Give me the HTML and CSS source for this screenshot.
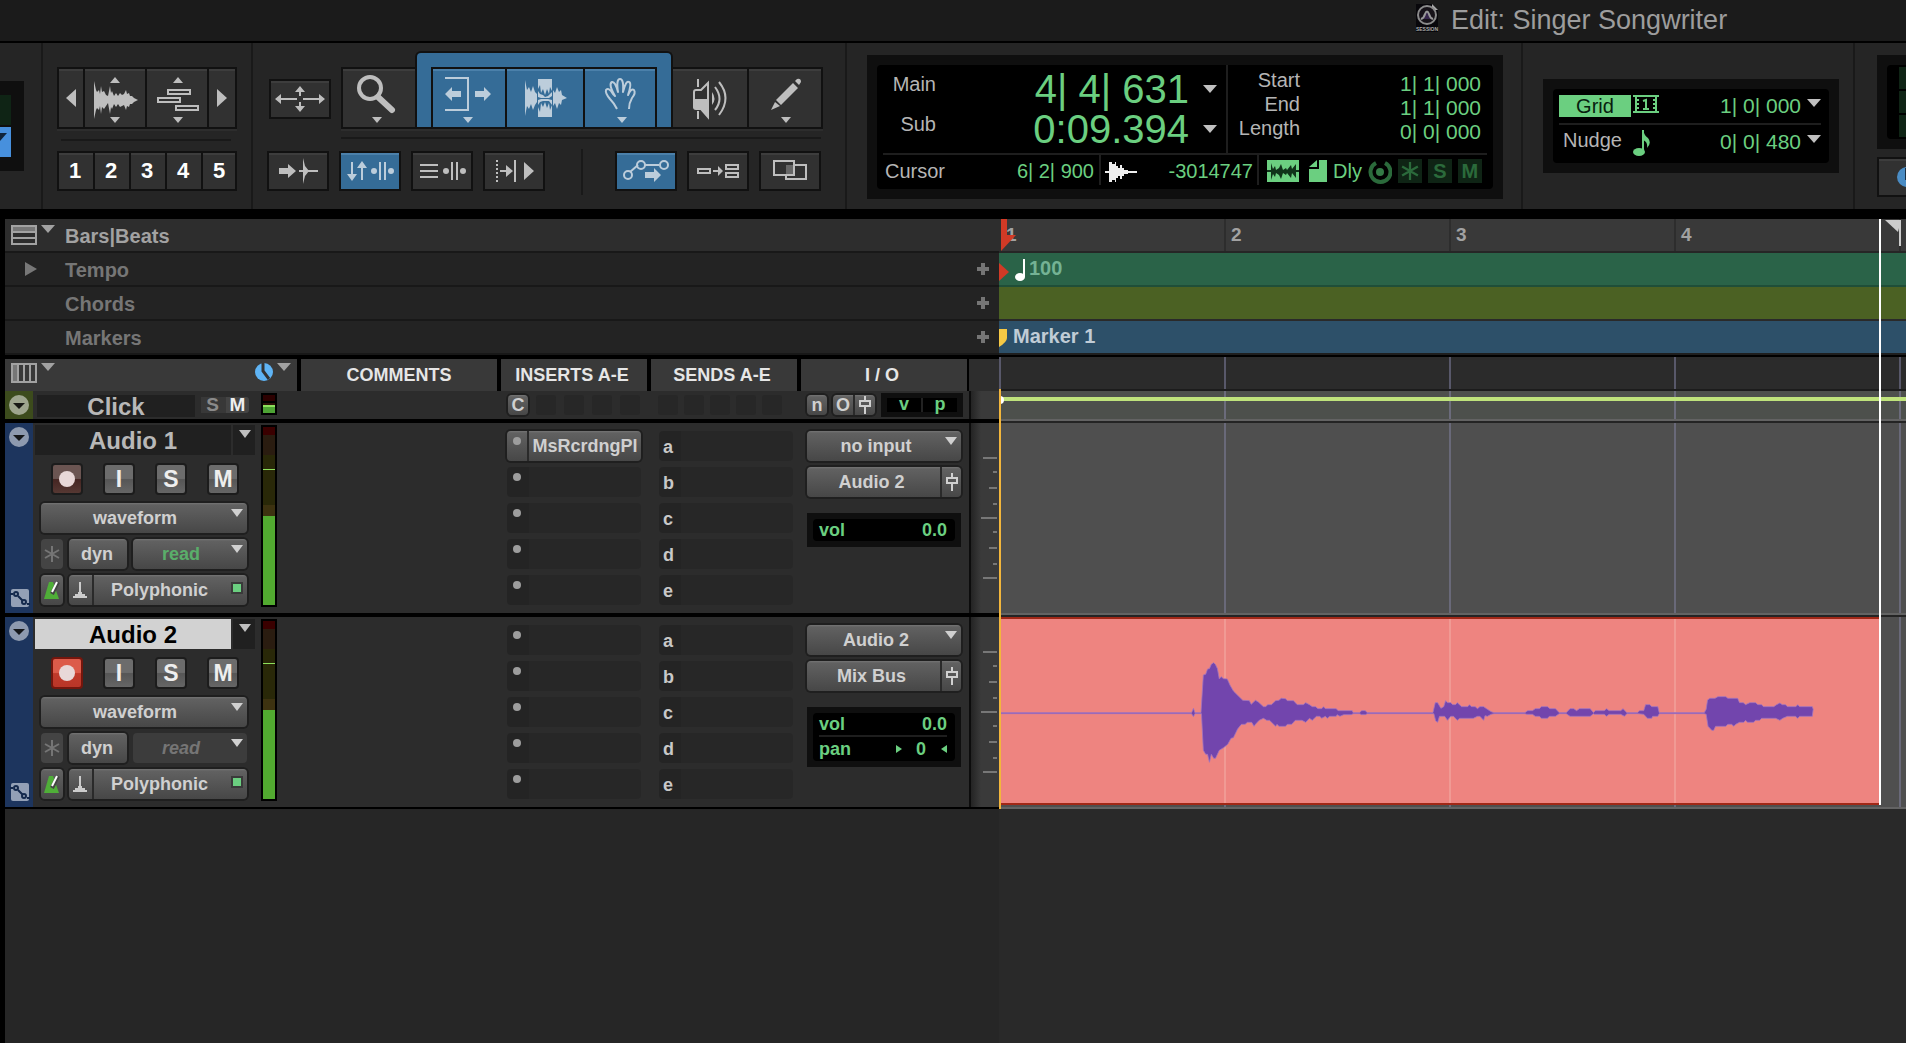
FILE: index.html
```html
<!DOCTYPE html>
<html lang="en">
<head>
  <meta charset="UTF-8">
  <title>Edit: Singer Songwriter</title>
  <meta name="viewport" content="width=device-width, initial-scale=1.0">
  <link rel="stylesheet" href="styles.css">
</head>
<body>
  <!-- shared icons -->
  <svg class="defs" aria-hidden="true">
    <symbol id="wave" viewBox="0 0 44 38"><path d="M0 0L2 9 3 11 5 9 6 13 7 5 8 11 10 10 12 14 14 15 16 5 17 12 18 10 20 15 22 12 24 15 26 12 28 14 30 13 32 9 33 13 35 12 36 15 38 15 40 17 44 19 40 21 38 23 36 23 35 26 33 25 32 29 30 24 28 25 26 26 24 23 22 26 20 23 18 28 17 26 16 33 14 22 12 25 10 28 8 26 7 33 6 25 5 29 3 27 2 29 0 38z" fill="currentColor"/></symbol>
    <symbol id="fader" viewBox="0 0 12 20"><path d="M6 1v5M6 12v7M1 6h10v5H1z" fill="none" stroke="currentColor" stroke-width="2"/></symbol>
    <symbol id="curve" viewBox="0 0 22 22"><rect x="2" y="2" width="18" height="18" rx="2" fill="#93a0b6"/><path d="M1 7h3M9 9l5 5M18 17h3" stroke="#14294d" stroke-width="2"/><circle cx="7" cy="7" r="2" fill="#93a0b6" stroke="#14294d" stroke-width="2"/><circle cx="15" cy="15" r="2" fill="#93a0b6" stroke="#14294d" stroke-width="2"/></symbol>
    <symbol id="metro" viewBox="0 0 18 20"><path d="M6 2h4l6 17H1z" fill="#4fae38"/><path d="M9 14l6-12" stroke="#444" stroke-width="4"/><path d="M9 12l5-10" stroke="#fff" stroke-width="2"/></symbol>
    <symbol id="timebase" viewBox="0 0 16 18"><path d="M8 1v12" stroke="#ccc" stroke-width="2"/><path d="M1 17v-2h2v-2h3v-2h4v2h3v2h2v2z" fill="#ccc"/></symbol>
    <symbol id="ticks" viewBox="0 0 28 190"><path d="M12 35h14M22 49h4M18 65h8M22 81h4M10 95h16M22 109h4M18 125h8M22 141h4M12 155h14" stroke="#777" stroke-width="2"/></symbol>
    <symbol id="circledown" viewBox="0 0 20 20"><circle cx="10" cy="10" r="10" fill="#fff" fill-opacity=".5"/><path d="M4 8h12l-6 6z" fill="#000" fill-opacity=".85"/></symbol>
    <symbol id="star" viewBox="0 0 16 16"><path d="M8 0v16M1 4l14 8M1 12l14-8" stroke="currentColor" stroke-width="2"/></symbol>
    <symbol id="plus" viewBox="0 0 12 12"><path d="M6 0v12M0 6h12" stroke="#757575" stroke-width="4"/></symbol>
  </svg>

  <header class="titlebar">
    <svg width="24" height="30" viewBox="0 0 24 30"><path d="M1 1h16l6 6v22H1z" fill="#08070b"/><path d="M17 1v6h6z" fill="#aaa"/><circle cx="12" cy="12" r="9" fill="#171319" stroke="#8b8b8b" stroke-width="2"/><path d="M6 16q3-1 4-5 2-5 4 0 1 4 4 5" fill="#36264b" stroke="#999" stroke-width="2"/><text x="12" y="28" class="icon-text" text-anchor="middle">SESSION</text></svg>
    <h1>Edit: Singer Songwriter</h1>
  </header>

  <div class="toolbar">
    <section class="mode-edge">
      <div class="edge-screen"><i></i><b><span class="tri"></span></b></div>
    </section>

    <section class="zoom">
      <div class="group zoom-top">
        <button class="tool" aria-label="Zoom out"><svg width="10" height="18" viewBox="0 0 10 18"><path d="M10 0v18L0 9z" fill="currentColor"/></svg></button>
        <button class="tool" aria-label="Audio zoom"><svg width="60" height="58" viewBox="0 0 60 58"><path d="M30 8l5 6H25zM30 54l5-6H25z" fill="currentColor"/><use href="#wave" x="9" y="12" width="44" height="38"/></svg></button>
        <button class="tool" aria-label="MIDI zoom"><svg width="60" height="58" viewBox="0 0 60 58"><path d="M31 8l5 6H26zM31 54l5-6H26z" fill="currentColor"/><path d="M21 21h22v4H21zM11 29h22v4H11zM29 37h22v4H29z" fill="none" stroke="currentColor" stroke-width="2"/></svg></button>
        <button class="tool" aria-label="Zoom in"><svg width="10" height="18" viewBox="0 0 10 18"><path d="M0 0v18l10-9z" fill="currentColor"/></svg></button>
      </div>
      <div class="group presets">
        <button class="tool">1</button>
        <button class="tool">2</button>
        <button class="tool">3</button>
        <button class="tool">4</button>
        <button class="tool">5</button>
      </div>
    </section>

    <section class="tools">
      <div class="tools-top">
        <button class="tool small" aria-label="Zoom toggle"><svg width="50" height="28" viewBox="0 0 50 28"><path d="M5 14h17M28 14h17M25 5v6M25 17v6" stroke="currentColor" stroke-width="2"/><path d="M0 14l6-5v10zM50 14l-6-5v10zM25 1l5 6H20zM25 27l5-6H20z" fill="currentColor"/></svg></button>
        <div class="group edit-tools">
          <button class="tool" aria-label="Zoomer"><svg width="72" height="58" viewBox="0 0 72 58"><circle cx="27" cy="19" r="11" fill="none" stroke="currentColor" stroke-width="4"/><path d="M35 28l14 13" stroke="currentColor" stroke-width="6" stroke-linecap="round"/><path d="M29 48h10l-5 6z" fill="currentColor"/></svg></button>
          <div class="smart">
            <button class="tool on" aria-label="Trim"><svg width="72" height="58" viewBox="0 0 72 58"><path d="M12 9h23v32H12" fill="none" stroke="currentColor" stroke-width="2"/><path d="M12 25l7-7v4h9v6h-9v4zM58 25l-7-7v4h-9v6h9v4zM30 48h10l-5 6z" fill="currentColor"/></svg></button>
            <button class="tool on" aria-label="Selector"><svg width="76" height="58" viewBox="0 0 76 58"><path d="M31 10h14v38H31z" fill="currentColor"/><path d="M18 11L20 21 22 18 24 23 26 17 28 23 30 25V33L28 36 26 41 24 35 22 40 20 37 18 47zM46 21L48 24 50 18 52 23 54 21 55 26 60 29 55 31 54 36 52 34 50 40 48 34 46 37z" fill="currentColor"/><path d="M31 20L33 16 34 24 36 20 38 26 40 20 42 25 43 18 45 22V36L43 41 42 34 40 39 38 33 36 38 34 34 33 43 31 38z" fill="#356c97"/><path d="M31 22l2 3 3 1 2 2 3-1 2-2 2-2v4l-3 2h-8l-3-1zM31 36l2-3 3-1h6l3 4v-5l-4-1h-7l-3 1z" fill="currentColor"/></svg></button>
            <button class="tool on" aria-label="Grabber"><svg width="70" height="58" viewBox="0 0 70 58"><path d="M32 40q-3-6-7-10-5-6-4-9 3-3 7 4l2 2q-7-12-3-14 3-1 6 10-2-13 2-13 4 0 3 13 3-12 6-10 3 1-1 13 3-7 6-5 2 3-2 8-3 5-3 11" fill="none" stroke="currentColor" stroke-width="2" stroke-linejoin="round"/><path d="M32 48h10l-5 6z" fill="currentColor"/></svg></button>
          </div>
          <button class="tool" aria-label="Scrubber"><svg width="74" height="58" viewBox="0 0 74 58"><path d="M25 10v8M25 42v8" stroke="currentColor" stroke-width="2"/><path d="M21 30V23q0-2 2-2h5l7-7v34l-7-8h-5q-2 0-2-2z" fill="none" stroke="currentColor" stroke-width="2"/><path d="M20 30h16v18l-8-8h-5q-3 0-3-3zM39 23q5 7 0 13z" fill="currentColor"/><path d="M42 18q9 12 0 23M46 13q13 16 0 33" fill="none" stroke="currentColor" stroke-width="2"/></svg></button>
          <button class="tool" aria-label="Pencil"><svg width="72" height="58" viewBox="0 0 72 58"><path d="M27 31l17-17 5 5-17 17zM46 12l2-2q4-1 4 3l-2 3zM26 33l5 4-9 4z" fill="currentColor"/><path d="M32 48h10l-5 6z" fill="currentColor"/></svg></button>
        </div>
      </div>
      <div class="tools-bottom">
        <button class="tool small" aria-label="Tab to transients"><svg width="40" height="28" viewBox="0 0 40 28"><path d="M1 11h9V7l8 7-8 7v-4H1zM25 1l2 8 4 5-4 5-2 8z" fill="currentColor"/><path d="M21 14h19" stroke="currentColor" stroke-width="2"/></svg></button>
        <button class="tool small on" aria-label="Link timeline"><svg width="48" height="28" viewBox="0 0 48 28"><path d="M6 5v14M16 9v14M34 5v18M39 5v18" stroke="currentColor" stroke-width="2"/><path d="M1 17h10l-5 7zM11 11h10l-5-7z" fill="currentColor"/><circle cx="28" cy="14" r="3" fill="currentColor"/><circle cx="45" cy="14" r="3" fill="currentColor"/></svg></button>
        <button class="tool small" aria-label="Link track"><svg width="48" height="28" viewBox="0 0 48 28"><path d="M2 8h18M2 14h18M2 20h18M34 5v18M39 5v18" stroke="currentColor" stroke-width="2"/><circle cx="28" cy="14" r="3" fill="currentColor"/><circle cx="45" cy="14" r="3" fill="currentColor"/></svg></button>
        <button class="tool small" aria-label="Insertion follows playback"><svg width="40" height="28" viewBox="0 0 40 28"><path d="M3 3v22" stroke="currentColor" stroke-width="2" stroke-dasharray="2 2"/><path d="M6 14h8M21 3v22" stroke="currentColor" stroke-width="2"/><path d="M12 8l7 6-7 6zM30 5l10 9-10 9z" fill="currentColor"/></svg></button>
        <span class="bar"></span>
        <button class="tool small on" aria-label="Automation follows edit"><svg width="48" height="28" viewBox="0 0 48 28"><path d="M8 15l8-7M23 8h14" stroke="currentColor" stroke-width="2"/><g fill="none" stroke="currentColor" stroke-width="2"><circle cx="6" cy="18" r="4"/><circle cx="19" cy="8" r="4"/><circle cx="42" cy="8" r="4"/></g><path d="M23 15h9v-4l7 7-7 7v-4h-9z" fill="currentColor"/></svg></button>
        <button class="tool small" aria-label="Mirrored MIDI"><svg width="44" height="28" viewBox="0 0 44 28"><path d="M2 12h12v4H2zM30 8h12v4H30zM30 16h12v4H30zM17 14h6" fill="none" stroke="currentColor" stroke-width="2"/><path d="M22 9l5 5-5 5z" fill="currentColor"/></svg></button>
        <button class="tool small" aria-label="Layered editing"><svg width="36" height="28" viewBox="0 0 36 28"><path d="M14 8h8v10h-8z" fill="#666"/><path d="M2 4h20v14H2z" fill="none" stroke="currentColor" stroke-width="2"/><path d="M23 8h11v14H14v-4" fill="none" stroke="currentColor" stroke-width="2"/></svg></button>
      </div>
    </section>

    <section class="counters">
      <div class="lcd">
        <div class="screen">
          <div class="screen-top">
            <div class="main-count">
              <span>Main</span><output>4| 4| 631</output><button class="tri" aria-label="Main format"></button>
              <span>Sub</span><output>0:09.394</output><button class="tri" aria-label="Sub format"></button>
            </div>
            <div class="sel-count">
              <span>Start</span><output>1| 1| 000</output>
              <span>End</span><output>1| 1| 000</output>
              <span>Length</span><output>0| 0| 000</output>
            </div>
          </div>
          <div class="screen-bottom">
            <div class="cursor"><span>Cursor</span><output>6| 2| 900</output></div>
            <div class="sample">
              <svg width="32" height="24" viewBox="0 0 32 24"><path d="M4 2h3v2h3v-2h1v4h2v2h2v-3h2v3h2v2h4v1h9v2h-9v1h-4v2h-2v3h-2v-3h-2v2h-2v4h-1v-2H7v2H4v-9H0v-2h4z" fill="#eee"/></svg>
              <output>-3014747</output>
            </div>
            <div class="status">
              <svg width="32" height="22" viewBox="0 0 32 22"><path d="M0 0h32v22H0z" fill="#6bcf80"/><path d="M0 10h32v2H0zM4 3l2 6 2-3 1 4 3-2 2-4 2 6 3-2 1 2 4-5 1 4 4-5v14l-4-5-1 5-4-5-1 2-3-2-2 6-2-4-3-2-1 4-2-3-2 6z" fill="#10331a"/></svg>
              <svg width="18" height="22" viewBox="0 0 18 22"><path d="M10 0h8v22H0V9h10zM8 0v7H0z" fill="#6bcf80"/></svg>
              <span class="dly">Dly</span>
              <svg width="24" height="24" viewBox="0 0 24 24"><path d="M8 3a10 10 0 1 0 9 0" fill="none" stroke="#2b6a3b" stroke-width="4"/><circle cx="12" cy="12" r="4" fill="#347a46"/></svg>
              <span class="dim"><svg width="18" height="18"><use href="#star"/></svg></span>
              <span class="dim">S</span>
              <span class="dim">M</span>
            </div>
          </div>
        </div>
      </div>
    </section>

    <section class="gridnudge">
      <div class="lcd">
        <div class="screen">
          <div class="gn-row">
            <button class="grid-on">Grid</button>
            <svg width="26" height="18" viewBox="0 0 26 18"><path d="M0 1h26M0 17h26M3 0v18M23 0v18" stroke="#6bcf80" stroke-width="2"/><path d="M5 4v12M21 4v12" stroke="#6bcf80" stroke-width="2" stroke-dasharray="2 2"/><path d="M10 6l3-1v9M10 14h6" fill="none" stroke="#6bcf80" stroke-width="2"/></svg>
            <output>1| 0| 000</output><button class="tri" aria-label="Grid value"></button>
          </div>
          <div class="gn-row">
            <span class="nudge">Nudge</span>
            <svg width="18" height="28" viewBox="0 0 18 28"><ellipse cx="6" cy="23" rx="6" ry="4" fill="#6bcf80"/><path d="M10 23V1" stroke="#6bcf80" stroke-width="2"/><path d="M10 1q1 5 5 8 4 5-1 10 1-6-4-8z" fill="#6bcf80"/></svg>
            <output>0| 0| 480</output><button class="tri" aria-label="Nudge value"></button>
          </div>
        </div>
      </div>
    </section>

    <section class="transport-edge">
      <div class="edge-lcd"><div><i></i><i></i><i></i></div></div>
      <div class="edge-btn"><svg width="32" height="36" viewBox="0 0 32 36"><circle cx="28" cy="18" r="10" fill="#4a8cc4"/><path d="M27 9v11h5" fill="none" stroke="#1b2f42" stroke-width="2"/></svg></div>
    </section>
  </div>

  <main class="editor">
    <div class="ruler bars">
      <div class="ruler-name">
        <svg class="view-icon" width="26" height="20" viewBox="0 0 26 20"><path d="M1 1h24v5H1z" fill="#777"/><path d="M1 1h24v18H1zM1 7h24M1 13h24" fill="none" stroke="#a2a2a2" stroke-width="2"/></svg>
        <span class="tri"></span>Bars|Beats
      </div>
      <div class="ruler-lane">
        <svg class="cursor-flag" width="18" height="32" viewBox="0 0 18 32"><path d="M0 0h6v16h9L0 32z" fill="#d13a26"/></svg>
        <span>1</span><span>2</span><span>3</span><span>4</span><span></span>
      </div>
    </div>
    <div class="ruler tempo">
      <div class="ruler-name"><svg class="expand" width="12" height="14" viewBox="0 0 12 14"><path d="M0 0l12 7-12 7z" fill="#777"/></svg>Tempo<button class="add" aria-label="Add tempo"><svg width="12" height="12"><use href="#plus"/></svg></button></div>
      <div class="ruler-lane">
        <svg width="30" height="32" viewBox="0 0 30 32"><path d="M0 10l10 9-10 9z" fill="#d13a26"/><ellipse cx="21" cy="24" rx="5" ry="4" fill="#fff"/><path d="M25 24V6" stroke="#fff" stroke-width="2"/></svg>100
      </div>
    </div>
    <div class="ruler chords">
      <div class="ruler-name">Chords<button class="add" aria-label="Add chord"><svg width="12" height="12"><use href="#plus"/></svg></button></div>
      <div class="ruler-lane"></div>
    </div>
    <div class="ruler markers">
      <div class="ruler-name">Markers<button class="add" aria-label="Add marker"><svg width="12" height="12"><use href="#plus"/></svg></button></div>
      <div class="ruler-lane"><svg width="14" height="32" viewBox="0 0 14 32"><path d="M0 8h8v9q0 4-8 9z" fill="#f6c945"/></svg>Marker 1</div>
    </div>

    <div class="row heads">
      <div class="panel">
        <div class="head view-head">
          <svg width="26" height="20" viewBox="0 0 26 20"><path d="M1 1h6v18H1z" fill="#777"/><path d="M1 1h24v18H1zM7 1v18M13 1v18M19 1v18" fill="none" stroke="#a2a2a2" stroke-width="2"/></svg>
          <span class="tri"></span>
          <svg class="clock" width="18" height="18" viewBox="0 0 18 18"><circle cx="9" cy="9" r="9" fill="#5fb4f5"/><path d="M8 0v8l6 8" fill="none" stroke="#333" stroke-width="3"/></svg>
          <span class="tri"></span>
        </div>
        <div class="head">COMMENTS</div>
        <div class="head">INSERTS A-E</div>
        <div class="head">SENDS A-E</div>
        <div class="head">I / O</div>
        <div class="head-end"></div>
      </div>
      <div class="lane"></div>
    </div>

    <div class="row click">
      <div class="panel">
        <div class="track-head">
          <div class="strip"><svg width="20" height="20"><use href="#circledown"/></svg></div>
          <div class="click-name">Click</div>
          <div class="click-sm"><button class="off">S</button><button>M</button></div>
          <div class="meter"></div>
        </div>
        <div></div>
        <div class="mini-slots"><button class="mini">C</button><i></i><i></i><i></i><i></i></div>
        <div class="mini-slots sends"><i></i><i></i><i></i><i></i><i></i></div>
        <div class="mini-io">
          <button class="mini">n</button>
          <span class="mini pair"><button>O</button><button aria-label="Output window"><svg width="12" height="20"><use href="#fader"/></svg></button></span>
          <div class="vp"><span>v</span><span>p</span></div>
        </div>
        <div class="gutter"></div>
      </div>
      <div class="lane"><div class="click-clip"></div></div>
    </div>

    <div class="row audio">
      <div class="panel">
        <div class="track-head">
          <div class="strip"><svg width="20" height="20"><use href="#circledown"/></svg><svg width="22" height="22"><use href="#curve"/></svg></div>
          <div class="controls">
            <div class="name-row"><button class="name">Audio 1</button><button class="name-menu" aria-label="Track menu"><span class="tri"></span></button></div>
            <div class="rism"><button class="rec" aria-label="Record"></button><button>I</button><button>S</button><button>M</button></div>
            <div class="opts">
              <label class="drop"><select aria-label="Track view"><option>waveform</option></select></label>
              <div class="opt-row"><button class="btn star" aria-label="Freeze"><svg width="16" height="16"><use href="#star"/></svg></button><button class="btn dyn">dyn</button><label class="drop read"><select aria-label="Automation"><option>read</option></select></label></div>
              <div class="opt-row"><button class="btn metro" aria-label="Timebase"><svg width="18" height="20"><use href="#metro"/></svg></button><div class="btn elastic"><button aria-label="Elastic"><svg width="16" height="18"><use href="#timebase"/></svg></button><button class="poly">Polyphonic<i></i></button></div></div>
            </div>
          </div>
          <div class="meter"></div>
        </div>
        <div></div>
        <div class="slots">
          <div class="btn plugin"><button aria-label="Insert a"></button><button>MsRcrdngPl</button></div>
          <div class="slot"></div><div class="slot"></div><div class="slot"></div><div class="slot"></div>
        </div>
        <div class="slots sends"><div class="slot">a</div><div class="slot">b</div><div class="slot">c</div><div class="slot">d</div><div class="slot">e</div></div>
        <div class="io">
          <label class="drop"><select aria-label="Input"><option>no input</option></select></label>
          <div class="btn output"><button>Audio 2</button><button aria-label="Output window"><svg width="12" height="20"><use href="#fader"/></svg></button></div>
          <div class="level"><div class="level-screen"><p><span>vol</span><output>0.0</output></p></div></div>
        </div>
        <div class="gutter"><svg width="28" height="190"><use href="#ticks"/></svg></div>
      </div>
      <div class="lane"></div>
    </div>

    <div class="row audio selected">
      <div class="panel">
        <div class="track-head">
          <div class="strip"><svg width="20" height="20"><use href="#circledown"/></svg><svg width="22" height="22"><use href="#curve"/></svg></div>
          <div class="controls">
            <div class="name-row"><button class="name">Audio 2</button><button class="name-menu" aria-label="Track menu"><span class="tri"></span></button></div>
            <div class="rism"><button class="rec armed" aria-label="Record"></button><button>I</button><button>S</button><button>M</button></div>
            <div class="opts">
              <label class="drop"><select aria-label="Track view"><option>waveform</option></select></label>
              <div class="opt-row"><button class="btn star" aria-label="Freeze"><svg width="16" height="16"><use href="#star"/></svg></button><button class="btn dyn">dyn</button><label class="drop read idle"><select aria-label="Automation"><option>read</option></select></label></div>
              <div class="opt-row"><button class="btn metro" aria-label="Timebase"><svg width="18" height="20"><use href="#metro"/></svg></button><div class="btn elastic"><button aria-label="Elastic"><svg width="16" height="18"><use href="#timebase"/></svg></button><button class="poly">Polyphonic<i></i></button></div></div>
            </div>
          </div>
          <div class="meter"></div>
        </div>
        <div></div>
        <div class="slots"><div class="slot"></div><div class="slot"></div><div class="slot"></div><div class="slot"></div><div class="slot"></div></div>
        <div class="slots sends"><div class="slot">a</div><div class="slot">b</div><div class="slot">c</div><div class="slot">d</div><div class="slot">e</div></div>
        <div class="io">
          <label class="drop"><select aria-label="Input"><option>Audio 2</option></select></label>
          <div class="btn output"><button>Mix Bus</button><button aria-label="Output window"><svg width="12" height="20"><use href="#fader"/></svg></button></div>
          <div class="level"><div class="level-screen"><p><span>vol</span><output>0.0</output></p><p class="pan"><span>pan</span><i class="pan-l"></i><output>0</output><i class="pan-r"></i></p></div></div>
        </div>
        <div class="gutter"><svg width="28" height="190"><use href="#ticks"/></svg></div>
      </div>
      <div class="lane">
        <div class="region">
          <svg width="876" height="184" viewBox="0 0 876 184">
            <g transform="translate(169 -18) scale(.4695 .3333)">
              <path fill="#7245ad" stroke="#a074c0" stroke-width="2" d="M-362 335H46L50 322 53 335H66L71 222 76 220 80 204 84 203 88 190 93 185 97 191 101 203 105 234 109 227 114 233 122 234 128 253 135 270 145 284 155 298 169 299 173 310 182 298 188 303 199 317 204 317 208 311 216 311 225 299 232 298 237 292 246 293 250 299 263 299 271 311 284 311 289 305 297 311 303 317 310 317 315 323 323 323 327 317 331 323 354 323 358 329 388 329 390 335 404 335 408 329 416 329 420 335 560 335 565 305 570 305 577 322 583 317 587 299 591 305 598 305 602 311 608 311 612 305 621 317 634 317 638 311 642 317 650 317 655 323 660 317 668 317 676 325 684 332 690 335 756 335 762 329 772 329 778 323 787 323 791 317 804 317 809 323 821 323 829 335 844 335 852 323 860 323 866 329 872 323 895 323 902 335 906 329 925 329 930 323 935 329 960 329 965 323 973 335 996 335 1000 329 1009 329 1013 311 1022 311 1026 317 1039 317 1042 335 1138 335 1142 325 1145 297 1150 292 1161 292 1167 287 1184 287 1188 292 1209 292 1213 305 1221 305 1226 311 1235 305 1247 305 1252 311 1260 311 1264 317 1286 317 1292 311 1299 306 1304 311 1311 311 1315 317 1333 317 1337 311 1341 317 1368 317 1370 325 1368 346 1341 346 1337 352 1332 346 1315 346 1305 352 1299 358 1290 352 1260 352 1256 358 1247 358 1243 364 1230 364 1226 358 1222 364 1213 364 1205 370 1201 376 1196 370 1188 370 1184 376 1162 376 1158 388 1154 388 1146 376 1142 340 1138 338 1042 338 1039 346 1028 346 1026 352 1017 352 1009 340 996 338 973 338 968 346 960 340 935 340 930 346 925 340 904 340 902 338 895 346 852 346 844 338 829 338 821 346 808 346 804 352 791 352 787 346 778 346 772 340 760 340 756 338 690 338 684 340 676 346 671 344 668 358 660 346 655 346 646 352 617 352 612 358 604 346 598 346 591 358 585 346 574 346 570 364 566 360 562 338 420 338 416 341 408 341 404 338 390 338 386 341 370 341 362 346 356 341 354 346 340 346 335 352 331 346 323 352 319 346 312 346 303 358 297 352 289 364 281 358 267 358 259 370 250 370 246 376 232 376 228 370 225 376 212 358 206 358 199 352 190 358 182 370 179 376 174 364 165 364 160 370 152 370 144 384 135 410 130 412 123 430 114 440 105 448 97 472 93 472 88 460 84 484 80 460 76 460 71 448 67 338 53 338 50 347 46 338H-362z"/>
            </g>
          </svg>
        </div>
      </div>
    </div>

    <div class="row empty"><div class="panel"></div><div class="lane"></div></div>

    <div class="insertion"></div>
    <div class="playhead"></div>
    <svg class="end-flag" width="16" height="28" viewBox="0 0 16 28"><path d="M0 1h16L13 13z" fill="#ccc"/><path d="M15 1v26" stroke="#ccc" stroke-width="2"/></svg>
  </main>
</body>
</html>
```
FILE: styles.css
```css
:root {
  --green: #6bcf80;
  --blue: #356c97;
  --icon: #bebebe;
  --panel-w: 994px;
  --beat: 225px;
}

* { box-sizing: border-box; margin: 0; padding: 0; }

body {
  font-family: "Liberation Sans", Arial, sans-serif;
  background: #000;
  color: #b5b5b5;
  min-height: 100vh;
  display: flex;
  flex-direction: column;
  overflow: hidden;
}

button, select {
  font: inherit;
  color: inherit;
  background: none;
  border: none;
  appearance: none;
}

svg { display: block; flex: none; }
.defs { position: absolute; width: 0; height: 0; }

.tri {
  width: 14px;
  height: 8px;
  flex: none;
  background: #c0c0c0;
  clip-path: polygon(0 0, 100% 0, 50% 100%);
}

/* title bar */
.titlebar {
  height: 43px;
  padding: 3px 0 0 1415px;
  background: #1b1b1b;
  border-bottom: 2px solid #000;
  display: flex;
  gap: 12px;
  white-space: nowrap;
}
.titlebar h1 { font-size: 27px; font-weight: normal; line-height: 34px; color: #9d9d9d; }
.icon-text { font-size: 5px; font-weight: bold; fill: #aaa; }

/* toolbar */
.toolbar {
  display: flex;
  height: 176px;
  background: #252525;
  border-bottom: 10px solid #000;
}
.toolbar section { flex: none; border-right: 2px solid #191919; }

.tool {
  background: linear-gradient(#3d3d3d 2px, #313131 2px);
  color: var(--icon);
  display: flex;
  align-items: center;
  justify-content: center;
}
.tool.on { background: linear-gradient(#4b80aa 2px, var(--blue) 2px); color: #bccddb; }
.tool.small { width: 62px; height: 40px; border: 2px solid #111; }

.group {
  display: flex;
  gap: 2px;
  background: #111;
  border: 2px solid #111;
  box-shadow: 0 2px #2d2d2d;
}

.mode-edge { width: 43px; padding-top: 38px; }
.edge-screen { width: 24px; height: 90px; background: #0f0f0f; padding: 10px 10px 10px 0; }
.edge-screen i, .edge-screen b { display: block; width: 11px; height: 30px; }
.edge-screen i { background: #0f2415; margin: 4px 0 2px; }
.edge-screen b { background: #4790dd; padding-top: 6px; overflow: hidden; }
.edge-screen .tri { display: block; background: #10243a; margin-left: -7px; }

.zoom { width: 210px; padding: 24px 14px 0; }
.zoom-top { height: 62px; }
.zoom-top .tool:first-child { width: 24px; }
.zoom-top .tool:nth-child(2), .zoom-top .tool:nth-child(3) { width: 60px; }
.zoom-top .tool:last-child { width: 26px; }
.presets { position: relative; height: 40px; margin-top: 22px; box-shadow: none; }
.presets .tool { width: 34px; font-size: 22px; font-weight: bold; color: #fff; padding-right: 2px; }
.presets .tool:last-child { width: 32px; padding: 0; }
.presets::before, .tools-bottom::before {
  content: "";
  position: absolute;
  top: -14px;
  left: 2px;
  right: 4px;
  height: 2px;
  background: #191919;
}

.tools { width: 594px; padding: 8px 0 0 14px; }
.tools-top { display: flex; align-items: flex-end; gap: 10px; padding-left: 2px; height: 78px; }
.tools-top > .small { margin-bottom: 10px; }
.edit-tools { height: 62px; align-items: stretch; }
.edit-tools .tool { flex: none; }
.smart {
  display: flex;
  gap: 2px;
  margin: -18px -2px 0;
  padding: 16px 16px 0;
  border: 2px solid #111;
  border-bottom: none;
  border-radius: 6px 6px 0 0;
  background: var(--blue);
}
.smart .tool { box-shadow: 0 0 0 2px #111; }
.tools-bottom { position: relative; display: flex; gap: 10px; margin-top: 22px; }
.tools-bottom::before { left: 74px; right: 24px; }
.tools-bottom .bar { width: 2px; height: 46px; margin: -2px 22px 0 26px; background: #191919; }

.counters { width: 676px; padding: 12px 18px 0 20px; }
.lcd { background: #0f0f0f; padding: 10px; }
.screen { background: #000; border-radius: 4px; font-size: 20px; }
.screen output { color: var(--green); white-space: pre; text-align: right; }
.screen-top { display: flex; height: 88px; }
.main-count {
  width: 351px;
  padding-top: 4px;
  border-right: 2px solid #1e1e1e;
  display: grid;
  grid-template-columns: 59px 253px 14px;
  grid-auto-rows: 40px;
}
.main-count span, .sel-count span { text-align: right; line-height: 30px; }
.main-count output { font-size: 40px; line-height: 40px; }
.main-count .tri { margin: 16px 0 0 14px; }
.sel-count {
  padding-top: 7px;
  display: grid;
  grid-template-columns: 72px 181px;
  grid-auto-rows: 24px;
}
.sel-count span { line-height: 17px; }
.sel-count output { font-size: 21px; line-height: 24px; }
.screen-bottom {
  display: flex;
  height: 36px;
  margin: 0 6px;
  border-top: 2px solid #1e1e1e;
  line-height: 33px;
}
.screen-bottom > div { display: flex; height: 30px; }
.cursor { width: 218px; padding: 0 5px 0 2px; justify-content: space-between; border-right: 2px solid #1e1e1e; }
.sample { width: 158px; padding: 0 4px; justify-content: space-between; border-right: 2px solid #1e1e1e; }
.sample svg, .status > svg { margin-top: 5px; }
.status { padding-left: 8px; gap: 6px; }
.status > svg:first-child { margin-right: 4px; }
.dly { color: var(--green); }
.dim {
  width: 24px;
  height: 24px;
  margin-top: 4px;
  background: #0f2415;
  color: #2b6a3b;
  font-weight: bold;
  line-height: 25px;
  text-align: center;
}
.dim svg { margin: 3px; }

.gridnudge { width: 332px; padding: 36px 14px 0 20px; }
.gn-row { display: flex; height: 34px; line-height: 34px; margin: 0 8px 0 6px; }
.gn-row:first-child { height: 36px; border-bottom: 2px solid #1e1e1e; }
.gn-row:last-child { height: 38px; }
.gn-row output { margin-left: auto; font-size: 21px; }
.gn-row > svg { margin: 6px 0 0 2px; }
.gn-row:last-child > svg { margin-top: 4px; }
.gn-row .tri { margin: 10px 0 0 6px; }
.grid-on { width: 72px; height: 22px; margin-top: 6px; background: var(--green); color: #08200e; line-height: 22px; }
.nudge { width: 72px; padding-left: 4px; line-height: 30px; }

.toolbar .transport-edge { flex: 1; overflow: hidden; border: none; padding: 12px 0 0 22px; }
.edge-lcd { height: 94px; padding: 10px 0 10px 10px; background: #0f0f0f; }
.edge-lcd div { height: 74px; padding: 2px 0 0 12px; background: #000; border-radius: 4px 0 0 4px; }
.edge-lcd i { display: block; height: 22px; margin-bottom: 2px; background: #0f2415; }
.edge-btn { height: 40px; margin-top: 8px; border: 2px solid #111; border-right: none; background: linear-gradient(#3d3d3d 2px, #313131 2px); }

/* rulers */
.editor { position: relative; flex: 1; display: flex; flex-direction: column; padding-left: 5px; }
.ruler { display: flex; height: 34px; font-size: 20px; font-weight: bold; line-height: 34px; }
.ruler-name {
  position: relative;
  width: var(--panel-w);
  flex: none;
  padding-left: 60px;
  background: #232323;
  border-bottom: 2px solid #181818;
  color: #767676;
}
.bars .ruler-name { background: #2d2d2d; color: #a2a2a2; }
.view-icon { position: absolute; left: 6px; top: 6px; }
.ruler-name .tri { position: absolute; left: 36px; top: 6px; background: #a2a2a2; }
.expand { position: absolute; left: 20px; top: 9px; }
.add { position: absolute; right: 10px; top: 10px; }
.ruler-lane { flex: 1; display: flex; overflow: hidden; line-height: 30px; border-bottom: 2px solid #1c2b24; }
.bars .ruler-lane { position: relative; background: #393939; border-color: #262626; font-size: 19px; line-height: 31px; color: #a2a2a2; }
.ruler-lane span { width: var(--beat); flex: none; padding-left: 5px; border-left: 2px solid #2d2d2d; }
.cursor-flag { position: absolute; left: 2px; top: 0; }
.tempo .ruler-lane { background: #2a6348; color: #74b294; border-color: #1f4e38; }
.chords .ruler-lane { background: #4b6123; border-color: #2a2a2a; }
.markers .ruler-lane { background: #2d5069; color: #c0ccd6; border-color: #1e1e1e; }

/* rows */
.row { display: flex; }
.panel {
  width: var(--panel-w);
  flex: none;
  display: grid;
  grid-template-columns: 292px 196px 146px 146px 166px 1fr;
  column-gap: 4px;
  background: #2c2c2c;
  border-bottom: 4px solid #000;
}
.lane {
  position: relative;
  flex: 1;
  overflow: hidden;
  background: repeating-linear-gradient(to right, #696979 0 2px, #4f4f4f 2px var(--beat));
  border-bottom: 2px solid #242424;
}
.lane::after { content: ""; position: absolute; left: 0; right: 0; bottom: 0; height: 2px; background: #636363; }

.heads { height: 36px; }
.heads .panel { background: #000; border-top: 4px solid #000; }
.head { background: #393939; color: #e6e6e6; font-size: 18px; font-weight: bold; line-height: 32px; text-align: center; }
.head:nth-child(n+3) { padding-right: 4px; }
.head-end { margin-left: -2px; background: #2d2d2d; }
.view-head { display: flex; padding: 4px 6px; gap: 4px; }
.view-head .clock { margin-left: auto; }
.view-head .tri { background: #a2a2a2; }
.heads .lane { background: repeating-linear-gradient(to right, #58586a 0 2px, #2b2b2b 2px var(--beat)); border-top: 2px solid #000; border-bottom-color: #1c1c1c; }
.heads .lane::after { display: none; }

.track-head { display: flex; }
.strip { width: 28px; padding: 4px; display: flex; flex-direction: column; justify-content: space-between; background: #1d355e; }

.click { height: 32px; }
.click .strip { background: #3c4b1c; }
.click-name { width: 158px; height: 22px; margin: 4px 6px 0 4px; background: #202020; color: #b8b8b8; font-size: 24px; font-weight: bold; line-height: 23px; text-align: center; }
.click-sm { display: flex; width: 48px; height: 16px; margin: 6px 12px 0 0; border-radius: 3px; background: #444; font-size: 19px; line-height: 16px; }
.click-sm button { flex: 1; color: #eee; font-weight: bold; }
.click-sm .off { color: #8a8a8a; background: #383838; padding-right: 2px; }
.meter { width: 16px; border: 2px solid #000; }
.click .meter { height: 22px; margin-top: 2px; background: linear-gradient(#2c0000 6px, #000 6px 8px, #2c1208 8px 10px, #8de05c 10px 12px, #4da334 12px); }
.mini-slots { display: flex; gap: 8px; padding: 4px 7px; }
.mini-slots.sends { gap: 6px; }
.mini-slots i { width: 20px; height: 20px; border-radius: 3px; background: #272727; }
.mini, .btn, .drop {
  background: linear-gradient(#757575, #616161 2px, #474747);
  box-shadow: 0 0 0 2px #1f1f1f;
  border-radius: 4px;
  color: #d0d0d0;
  font-weight: bold;
}
.mini { width: 20px; height: 20px; font-size: 18px; line-height: 20px; }
.mini-io { display: flex; padding: 4px 0 0 6px; gap: 6px; }
.pair { display: flex; width: 42px; }
.pair button { width: 20px; }
.pair button + button { width: 22px; padding-left: 4px; border-left: 2px solid #2a2a2a; }
.vp { display: flex; width: 82px; height: 24px; margin: -2px 0 0; padding: 5px 6px; background: #0f0f0f; color: var(--green); font-size: 18px; font-weight: bold; line-height: 12px; }
.vp span { flex: 1; height: 14px; text-align: center; background: #000; }
.vp span + span { border-left: 2px solid #222; }
.click .lane { background: repeating-linear-gradient(to right, #6b6b7b 0 2px, #4d504c 2px var(--beat)); }
.click-clip { height: 4px; margin-top: 6px; background: #bfe37c; }
.click-clip::before { content: ""; position: absolute; left: -3px; top: 5px; width: 8px; height: 8px; border-radius: 50%; background: #fff; }

.gutter { margin-left: -2px; border-left: 2px solid #0c0c0c; background: linear-gradient(to right, #242424, #3a3a3a 10px); overflow: hidden; }

.audio { height: 194px; }
.controls { width: 220px; margin: 2px 6px 0 2px; }
.name-row { display: flex; gap: 2px; }
.name { width: 196px; height: 30px; background: #202020; color: #b8b8b8; font-size: 24px; font-weight: bold; line-height: 32px; }
.name-menu { width: 22px; height: 30px; padding: 0 5px 12px 6px; background: #202020; }
.name-menu .tri { display: block; width: 12px; }
.selected .name { background: #d2d2d2; color: #000; }
.rism { display: flex; gap: 20px; padding: 8px 0 8px 16px; }
.rism button {
  width: 32px;
  height: 32px;
  border: 2px solid #1c1c1c;
  border-radius: 4px;
  background: linear-gradient(#6c6c6c 48%, #565656 52%, #666);
  color: #eee;
  font-size: 23px;
  font-weight: bold;
  line-height: 28px;
}
.rism .rec { background: linear-gradient(#6b5552 48%, #452522 52%, #563833); }
.rism .armed { background: linear-gradient(#dc5b4a 48%, #c03a2b 52%, #b93628); border-color: #74160d; }
.rec::before { content: ""; display: block; width: 16px; height: 16px; margin: 0 auto; border-radius: 50%; background: #e8d8d8; }

.opts { width: 206px; margin-left: 6px; display: flex; flex-direction: column; gap: 6px; font-size: 18px; }
.opt-row { display: flex; gap: 6px; }
.btn, .drop { height: 30px; line-height: 31px; }
.drop { position: relative; display: block; }
.drop::after {
  content: "";
  position: absolute;
  top: 6px;
  right: 4px;
  width: 12px;
  height: 8px;
  background: #d0d0d0;
  clip-path: polygon(0 0, 100% 0, 50% 100%);
}
.drop select { display: block; width: 100%; height: 31px; padding-right: 18px; text-align: center; text-align-last: center; }
.btn.star { width: 22px; padding-left: 3px; background: #444; color: #757575; box-shadow: none; }
.dyn { width: 58px; padding-right: 2px; }
.read { flex: 1; color: #5aae6a; }
.read.idle { background: #3c3c3c; box-shadow: none; color: #757575; font-style: italic; }
.metro { width: 22px; padding-left: 2px; }
.elastic { flex: 1; display: flex; }
.elastic button:first-child { width: 23px; padding-left: 3px; }
.poly { flex: 1; display: flex; align-items: center; justify-content: space-between; padding: 0 4px 0 17px; border-left: 2px solid #2a2a2a; }
.poly i { width: 12px; height: 12px; margin-top: -4px; border: 2px solid #3a3a3a; background: var(--green); }
.audio .meter {
  height: 182px;
  margin-top: 2px;
  background: linear-gradient(#3a0000 8px, #2a1c10 8px 28px, #292808 28px 42px, #8de05c 42px 43px, #292808 43px 78px, #3d3210 78px 89px, #52aa30 89px);
}

.slots { display: flex; flex-direction: column; gap: 6px; padding: 8px 6px 0; font-size: 18px; font-weight: bold; }
.slot { height: 30px; border-radius: 4px; background: linear-gradient(to right, #242424 22px, #272727 22px); color: #c8c8c8; line-height: 33px; }
.slot:empty::before, .plugin button:first-child::before {
  content: "";
  display: block;
  width: 8px;
  height: 8px;
  margin: 6px 0 0 6px;
  border-radius: 50%;
  background: #9d9d9d;
  float: left;
}
.slots.sends { padding: 8px 4px 0 8px; }
.sends .slot { padding-left: 4px; }
.plugin { display: flex; }
.plugin button:first-child { width: 22px; height: 30px; border-right: 2px solid #2a2a2a; display: flex; }
.plugin button:last-child { flex: 1; overflow: hidden; }

.io { padding: 8px 6px 0; font-size: 18px; }
.io .drop select { padding-right: 16px; }
.output { display: flex; margin-top: 6px; }
.output button:first-child { flex: 1; padding-right: 4px; }
.output button:last-child { width: 21px; padding-left: 4px; border-left: 2px solid #2a2a2a; }
.level { margin-top: 16px; padding: 6px; background: #0f0f0f; color: var(--green); font-weight: bold; }
.level-screen { background: #000; border-radius: 4px; padding: 0 8px 0 6px; }
.level p { display: flex; justify-content: space-between; align-items: center; height: 22px; line-height: 22px; }
.level .pan { height: 26px; border-top: 2px solid #1e1e1e; justify-content: flex-start; }
.pan i { width: 6px; height: 8px; background: var(--green); }
.pan-l { margin: 0 14px 0 auto; clip-path: polygon(0 0, 100% 50%, 0 100%); }
.pan-r { margin-left: 15px; clip-path: polygon(100% 0, 0 50%, 100% 100%); }

.selected { height: 192px; }
.selected .panel { border-bottom-width: 2px; }
.selected .lane { border-bottom: none; }
.region {
  position: absolute;
  left: 0;
  top: 0;
  width: 880px;
  height: 188px;
  border: 2px solid #a12817;
  border-right: none;
  background: repeating-linear-gradient(to right, #f09a94 0 2px, #ee8480 2px var(--beat)) border-box;
}

.empty { flex: 1; }
.empty .panel { background: #262626; border: none; }
.empty .lane { background: #292929; border: none; }
.empty .lane::after { display: none; }

/* overlays on the timeline */
.insertion { position: absolute; left: 999px; top: 170px; width: 2px; height: 420px; background: #f2b63c; }
.playhead { position: absolute; left: 1879px; top: 0; width: 2px; height: 586px; background: #fff; }
.end-flag { position: absolute; left: 1885px; top: 0; }
```
